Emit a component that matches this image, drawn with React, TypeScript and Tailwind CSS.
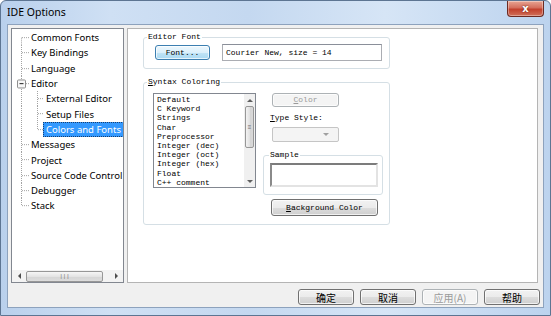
import React from "react";

const mono = "font-['Liberation_Mono','DejaVu_Sans_Mono',monospace] text-[8px]";

type Row = { label: string; level: 0 | 1; kind: "first" | "mid" | "last" | "editor"; childLast?: boolean; selected?: boolean };

const rows: Row[] = [
  { label: "Common Fonts", level: 0, kind: "first" },
  { label: "Key Bindings", level: 0, kind: "mid" },
  { label: "Language", level: 0, kind: "mid" },
  { label: "Editor", level: 0, kind: "editor" },
  { label: "External Editor", level: 1, kind: "mid" },
  { label: "Setup Files", level: 1, kind: "mid" },
  { label: "Colors and Fonts", level: 1, kind: "mid", childLast: true, selected: true },
  { label: "Messages", level: 0, kind: "mid" },
  { label: "Project", level: 0, kind: "mid" },
  { label: "Source Code Control", level: 0, kind: "mid" },
  { label: "Debugger", level: 0, kind: "mid" },
  { label: "Stack", level: 0, kind: "last" },
];

const dot = { stroke: "#a3a3a3", strokeWidth: 1, strokeDasharray: "1 1" } as const;

function RootCell({ kind, passthrough }: { kind: Row["kind"]; passthrough?: boolean }) {
  return (
    <svg width="17" height="100%" className="shrink-0 h-full">
      {passthrough ? (
        <line x1="9.5" y1="0" x2="9.5" y2="100%" {...dot} />
      ) : kind === "editor" ? (
        <>
          <line x1="9.5" y1="0" x2="9.5" y2="30%" {...dot} />
          <line x1="9.5" y1="72%" x2="9.5" y2="100%" {...dot} />
          <line x1="14" y1="50%" x2="17" y2="50%" {...dot} />
          <rect x="5.5" y="26%" width="8" height="8" fill="#f7f7f7" stroke="#8f8f8f" rx="1" />
          <line x1="7.5" y1="50%" x2="11.5" y2="50%" stroke="#222" strokeWidth="1" />
        </>
      ) : (
        <>
          <line x1="9.5" y1={kind === "first" ? "50%" : "0"} x2="9.5" y2={kind === "last" ? "50%" : "100%"} {...dot} />
          <line x1="10" y1="50%" x2="17" y2="50%" {...dot} />
        </>
      )}
    </svg>
  );
}

function ChildCell({ last }: { last?: boolean }) {
  return (
    <svg width="14" height="100%" className="shrink-0 h-full">
      <line x1="8.5" y1="0" x2="8.5" y2={last ? "50%" : "100%"} {...dot} />
      <line x1="9" y1="50%" x2="14" y2="50%" {...dot} />
    </svg>
  );
}

function Tri({ dir, color = "#4d4d4d" }: { dir: "l" | "r" | "u" | "d"; color?: string }) {
  const pts = { l: "4,0 4,6 1,3", r: "1,0 1,6 4,3", u: "0,4 6,4 3,1", d: "0,1 6,1 3,4" }[dir];
  const w = dir === "l" || dir === "r" ? 5 : 6;
  const h = dir === "l" || dir === "r" ? 6 : 5;
  return (
    <svg width={w} height={h} viewBox={`0 0 ${w} ${h}`}>
      <polygon points={pts} fill={color} />
    </svg>
  );
}

function WinButton({ children, w, h = "h-[16px]", disabled, blue }: { children: React.ReactNode; w: string; h?: string; disabled?: boolean; blue?: boolean }) {
  const base = disabled
    ? "border-[#adb2b5] bg-[#f4f4f4] text-[#9a9a9a]"
    : blue
    ? "border-[#3c7fb1] bg-[linear-gradient(#edf8fe_0%,#dcf0fb_50%,#c2e4f6_51%,#a9d9f2_100%)] text-black"
    : "border-[#707070] bg-[linear-gradient(#f2f2f2_0%,#ebebeb_50%,#dddddd_51%,#cfcfcf_100%)] text-black";
  return (
    <div className={`${w} ${h} ${base} border rounded-[3px] flex items-center justify-center shadow-[inset_0_0_0_1px_rgba(255,255,255,0.7)]`}>
      {children}
    </div>
  );
}

function Group({ legend, className, legendLeft, children }: { legend: React.ReactNode; className: string; legendLeft: string; children?: React.ReactNode }) {
  return (
    <div className={`relative border border-[#d5dfe5] rounded-[3px] ${className}`}>
      <div className={`absolute -top-[6px] ${legendLeft} bg-white px-[1px] leading-[10px] ${mono} text-black`}>{legend}</div>
      {children}
    </div>
  );
}

const items = ["Default", "C Keyword", "Strings", "Char", "Preprocessor", "Integer (dec)", "Integer (oct)", "Integer (hex)", "Float", "C++ comment"];

export default function App() {
  return (
    <div className="w-[551px] h-[316px] overflow-hidden bg-white">
      <div className="w-[551px] h-[316px] flex flex-col border border-[#5d7592] rounded-t-[6px] bg-[linear-gradient(90deg,#b9d0ec_0%,#cfe0f4_20%,#c4d8f0_45%,#d6e5f6_70%,#bcd3ee_100%)] font-['Noto_Sans',sans-serif]">
        {/* title bar */}
        <div className="h-[23px] shrink-0 flex items-start">
          <div className="pl-[6px] pt-[4px] text-[10.5px] leading-[14px] text-black">IDE Options</div>
          <div className="ml-auto mr-[6px] w-[37px] h-[16px] rounded-b-[4px] border border-t-0 border-[#6c2a22] bg-[linear-gradient(#e8a593_0%,#d46e5c_45%,#c2402c_55%,#d0705a_100%)] flex items-center justify-center shadow-[inset_0_0_0_1px_rgba(255,255,255,0.35)]">
            <span className="text-white font-bold text-[10px] leading-[10px] font-['DejaVu_Sans',sans-serif] [text-shadow:0_0_2px_#5a1a10]">x</span>
          </div>
        </div>
        {/* client */}
        <div className="flex-1 px-[6px] pb-[7px] flex">
          <div className="flex-1 bg-[#f0f0f0] border border-[#8da2bd] flex flex-col">
            <div className="flex pt-[3px] pl-[3px] gap-[3px]">
              {/* tree */}
              <div className="w-[113px] h-[255px] bg-white border border-[#828790] flex flex-col">
                <div className="flex-1 overflow-hidden pt-[1px]">
                  {rows.map((r) => (
                    <div key={r.label} className="h-[15.3px] flex items-stretch whitespace-nowrap">
                      <RootCell kind={r.kind} passthrough={r.level === 1} />
                      {r.level === 1 && <ChildCell last={r.childLast} />}
                      {r.selected ? (
                        <div className="self-center h-[15px] flex items-center px-[2px] bg-[#3399ff] text-white border border-dotted border-[#1a3f6e] text-[9.5px] leading-[13px]">
                          {r.label}
                        </div>
                      ) : (
                        <div className={`self-center ${r.level === 1 ? "pl-[3px]" : "pl-[2px]"} text-[9.5px] leading-[13px] text-black`}>{r.label}</div>
                      )}
                    </div>
                  ))}
                </div>
                <div className="h-[12px] flex items-center bg-[#f3f3f3]">
                  <div className="w-[14px] flex justify-center"><Tri dir="l" /></div>
                  <div className="w-[77px] h-[11px] rounded-[2px] border border-[#979797] bg-[linear-gradient(#f6f6f6,#e4e4e4_50%,#d6d6d6_51%,#dcdcdc)] flex items-center justify-center">
                    <span className="text-[6px] leading-[6px] text-[#666]">|||</span>
                  </div>
                  <div className="flex-1" />
                  <div className="w-[14px] flex justify-center"><Tri dir="r" /></div>
                </div>
              </div>
              {/* right panel */}
              <div className="w-[411px] h-[255px] bg-white border border-[#b4b4b4]">
                <Group legend="Editor Font" legendLeft="left-[3px]" className="mt-[8px] ml-[15px] w-[247px] h-[32px]">
                  <div className="flex items-start pl-[11px] pt-[7px] gap-[12px]">
                    <WinButton w="w-[55px]" h="h-[15px]" blue>
                      <span className={`${mono} leading-[10px]`}>Font...</span>
                    </WinButton>
                    <div className="-mt-[1px] w-[160px] h-[17px] border border-[#abadb3] border-t-[#8a8f99] bg-white flex items-center pl-[3px]">
                      <span className={`${mono} leading-[10px] text-black`}>Courier New, size = 14</span>
                    </div>
                  </div>
                </Group>
                <Group
                  legend={<><span className="underline">S</span>yntax Coloring</>}
                  legendLeft="left-[3px]"
                  className="mt-[13px] ml-[15px] w-[247px] h-[143px]"
                >
                  <div className="flex pl-[9px] pt-[10px] gap-[7px]">
                    {/* listbox */}
                    <div className="w-[103px] h-[95px] border border-[#828790] bg-white flex">
                      <div className={`flex-1 pl-[3px] pt-[1px] ${mono} leading-[9.2px] text-black whitespace-pre overflow-hidden`}>
                        {items.map((it) => (
                          <div key={it}>{it}</div>
                        ))}
                      </div>
                      <div className="w-[11px] bg-[#f0f0f0] flex flex-col items-stretch">
                        <div className="h-[12px] flex items-center justify-center"><Tri dir="u" color="#606060" /></div>
                        <div className="mx-[1px] h-[42px] rounded-[2px] border border-[#979797] bg-[linear-gradient(90deg,#f3f3f3,#e2e2e2_50%,#d3d3d3_51%,#dadada)] flex items-center justify-center">
                          <span className="text-[6px] leading-[6px] text-[#666]">≡</span>
                        </div>
                        <div className="flex-1" />
                        <div className="h-[12px] flex items-center justify-center"><Tri dir="d" color="#606060" /></div>
                      </div>
                    </div>
                    {/* right column */}
                    <div className="flex flex-col w-[120px]">
                      <div className="ml-[9px]">
                        <WinButton w="w-[67px]" h="h-[14px]" disabled>
                          <span className={`${mono} leading-[10px]`}><span className="underline">C</span>olor</span>
                        </WinButton>
                      </div>
                      <div className={`ml-[7px] mt-[6px] ${mono} leading-[10px] text-black`}><span className="underline">T</span>ype Style:</div>
                      <div className="ml-[9px] mt-[4px] w-[67px] h-[15px] border border-[#c5c5c5] bg-[#f4f4f4] rounded-[2px] flex items-center justify-end pr-[9px]">
                        <Tri dir="d" color="#a0a0a0" />
                      </div>
                      <Group legend="Sample" legendLeft="left-[5px]" className="mt-[13px] w-[120px] h-[40px]">
                        <div className="ml-[6px] mt-[7px] w-[108px] h-[24px] border-2 border-t-[#7c7c7c] border-l-[#8a8a8a] border-r-[#e3e3e3] border-b-[#e3e3e3] bg-white" />
                      </Group>
                      <div className="ml-[8px] mt-[4px]">
                        <WinButton w="w-[107px]" h="h-[17px]">
                          <span className={`${mono} leading-[10px]`}><span className="underline">B</span>ackground Color</span>
                        </WinButton>
                      </div>
                    </div>
                  </div>
                </Group>
              </div>
            </div>
            {/* buttons */}
            <div className="mt-[6px] pr-[3px] flex justify-end gap-[6px] font-['Noto_Sans_CJK_SC',sans-serif] text-[10px]">
              <WinButton w="w-[56px]">确定</WinButton>
              <WinButton w="w-[56px]">取消</WinButton>
              <WinButton w="w-[56px]" disabled>应用(A)</WinButton>
              <WinButton w="w-[56px]">帮助</WinButton>
            </div>
          </div>
        </div>
      </div>
    </div>
  );
}
